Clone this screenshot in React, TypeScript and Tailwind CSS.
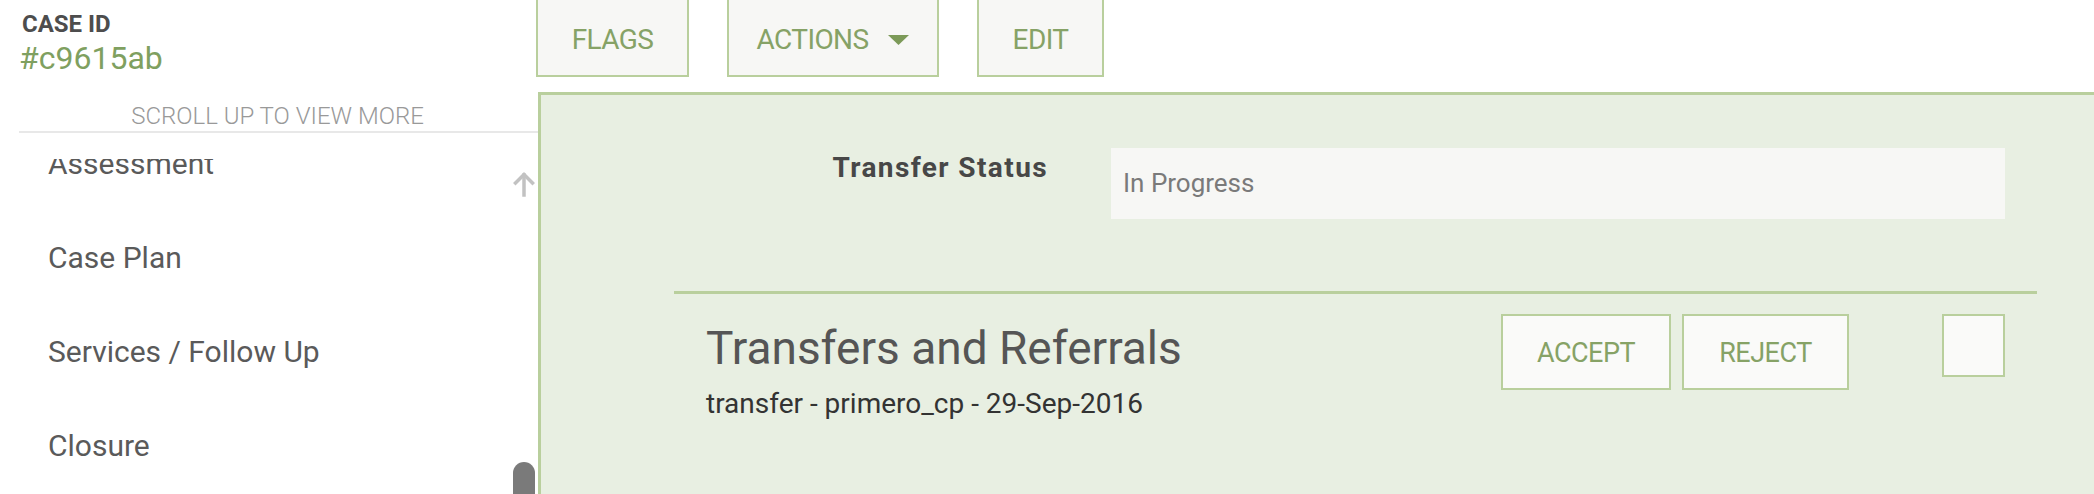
import { ReactNode } from 'react';

const menuItems = ['Assessment', 'Case Plan', 'Services / Follow Up', 'Closure'];

function TopButton({ children, width }: { children: ReactNode; width: string }) {
  return (
    <button
      className={`${width} h-[77px] flex items-center justify-center gap-[20px] border-x-2 border-b-2 border-[#b9cf9d] bg-[#f7f7f5] pt-[4px] text-[28px] leading-[28px] tracking-[-0.6px] text-[#86a266]`}
    >
      {children}
    </button>
  );
}

function UpArrow() {
  return (
    <svg width="22" height="26" viewBox="0 0 22 26" fill="none" stroke="#c2c2c2" strokeWidth="3.5" strokeLinecap="square">
      <path d="M11 4 L11 24" />
      <path d="M2.5 12 L11 3.5 L19.5 12" />
    </svg>
  );
}

export default function App() {
  return (
    <div className="flex h-[494px] w-full overflow-hidden bg-white font-['Roboto',sans-serif]">
      {/* Sidebar */}
      <div className="flex w-[536px] shrink-0 flex-col pl-[19px]">
        <div className="ml-[3px] mt-[12px] text-[24px] font-bold leading-[24px] text-[#4d4d4d]">CASE ID</div>
        <div className="mt-[6px] text-[32px] leading-[32px] text-[#7fa060]">#c9615ab</div>
        <div className="mt-[30px] text-center text-[24px] font-light leading-[24px] text-[#999999]">
          SCROLL UP TO VIEW MORE
        </div>
        <div className="mt-[3px] mr-[-2px] h-[2px] bg-[#e8e8e8]" />
        <div className="relative mt-[26px] flex-1 overflow-hidden">
          <div className="mt-[-42px] flex flex-col">
            {menuItems.map((item) => (
              <div key={item} className="h-[94px] pl-[29px] text-[30px] leading-[94px] text-[#5a5a5a]">
                {item}
              </div>
            ))}
          </div>
          <div className="absolute left-[494px] top-[12px]">
            <UpArrow />
          </div>
          <div className="absolute left-[494px] top-[303px] h-[40px] w-[22px] rounded-t-full bg-[#7a7a7a]" />
        </div>
      </div>

      {/* Main */}
      <div className="flex min-w-0 flex-1 flex-col">
        <div className="flex h-[77px] gap-[38px]">
          <TopButton width="w-[153px]">FLAGS</TopButton>
          <TopButton width="w-[212px]">
            <span>ACTIONS</span>
            <svg width="21" height="10" viewBox="0 0 21 10">
              <path d="M0 0 H21 L10.5 10 Z" fill="#7c9a58" />
            </svg>
          </TopButton>
          <TopButton width="w-[127px]">EDIT</TopButton>
        </div>

        <div className="ml-[2px] mt-[15px] flex-1 border-l-[3px] border-t-[3px] border-[#b9cf9d] bg-[#e8efe2] pl-[133px] pr-[57px] pt-[53px]">
          <div className="flex items-start gap-[63px] px-[32px]">
            <div className="w-[342px] pt-[6px] text-right text-[28px] font-bold leading-[28px] tracking-[1.4px] text-[#474747]">
              Transfer Status
            </div>
            <div className="flex h-[71px] flex-1 items-center bg-[#f7f7f5] pl-[12px] text-[26px] text-[#7a7a7a]">
              In Progress
            </div>
          </div>

          <div className="mt-[72px] border-t-[3px] border-[#b9cf9d] px-[32px] pt-[20px]">
            <div className="flex items-start">
              <div className="flex-1">
                <div className="mt-[11px] text-[46px] leading-[46px] text-[#555555]">Transfers and Referrals</div>
                <div className="mt-[19px] text-[28px] leading-[28px] text-[#333333]">
                  transfer - primero_cp - 29-Sep-2016
                </div>
              </div>
              <div className="flex gap-[11px]">
                <button className="flex h-[76px] w-[170px] items-center justify-center border-2 border-[#b9cf9d] bg-[#fafaf9] pt-[2px] text-[27px] tracking-[-0.5px] text-[#86a266]">
                  ACCEPT
                </button>
                <button className="flex h-[76px] w-[167px] items-center justify-center border-2 border-[#b9cf9d] bg-[#fafaf9] pt-[2px] text-[27px] tracking-[-0.5px] text-[#86a266]">
                  REJECT
                </button>
              </div>
              <div className="ml-[93px] h-[63px] w-[63px] border-2 border-[#b9cf9d] bg-[#fafaf9]" />
            </div>
          </div>
        </div>
      </div>
    </div>
  );
}
